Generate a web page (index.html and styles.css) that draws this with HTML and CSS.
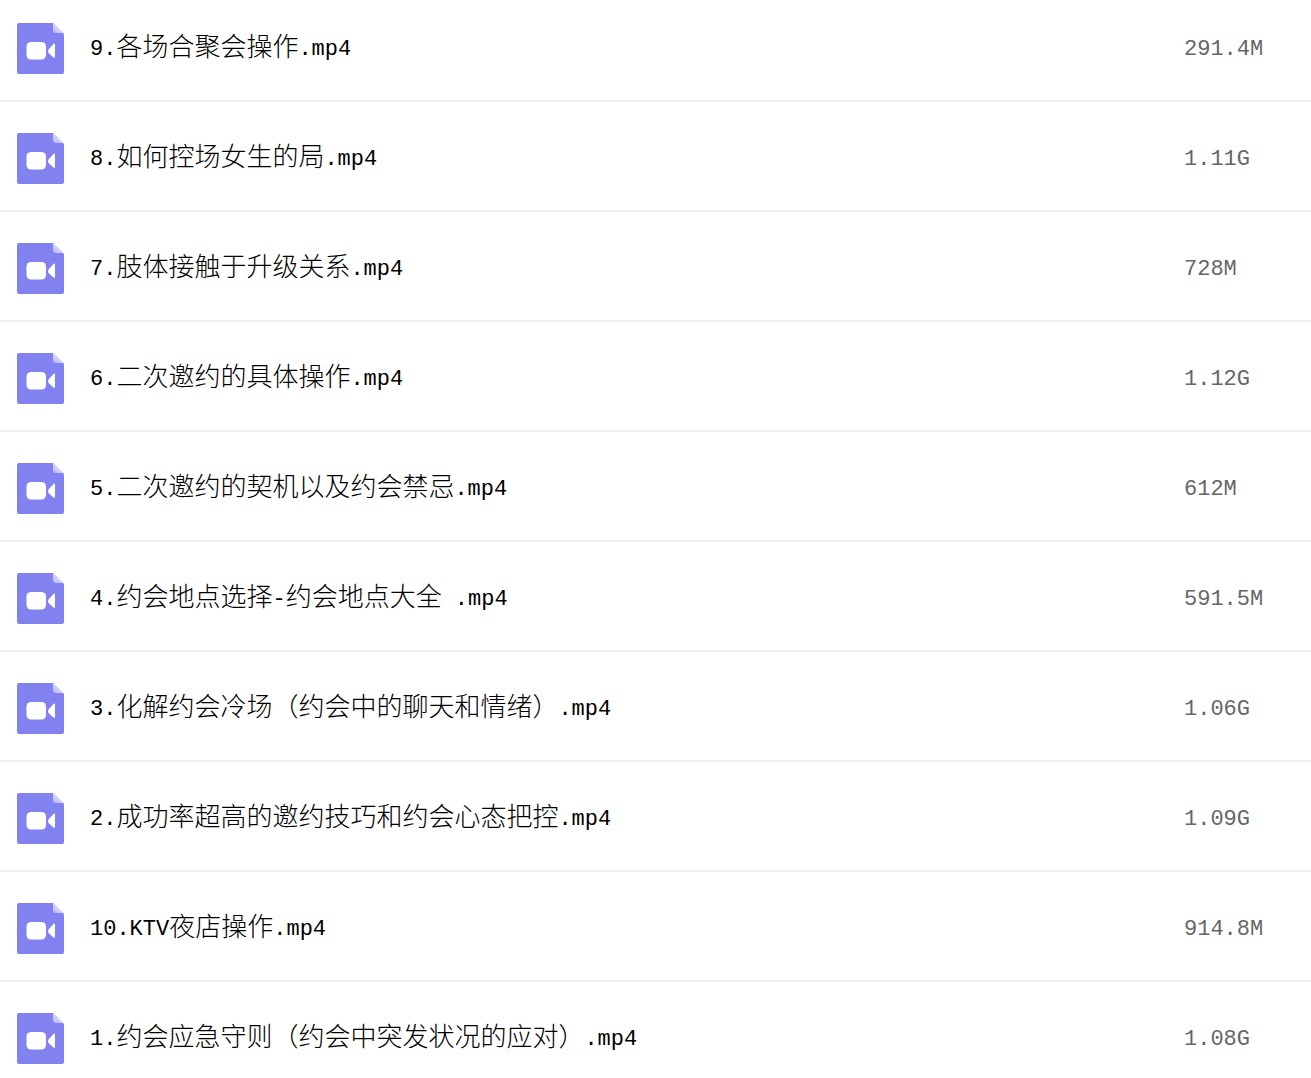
FILE: index.html
```html
<!DOCTYPE html>
<html lang="zh-CN">
<head>
<meta charset="utf-8">
<title>文件列表</title>
<link rel="stylesheet" href="styles.css">
</head>
<body>
<svg class="sprite" aria-hidden="true">
  <defs>
    <linearGradient id="fold" x1="0" y1="1" x2="1" y2="0">
      <stop offset="0" stop-color="#b4b4f8"/>
      <stop offset="0.6" stop-color="#dcdcfc"/>
    </linearGradient>
  </defs>
  <symbol id="video" viewBox="0 0 47 51">
    <path fill="#8182f0" d="M2 0H36L47 11V49Q47 51 45 51H2Q0 51 0 49V2Q0 0 2 0Z"/>
    <path fill="url(#fold)" d="M36 0L47 10H39Q36 10 36 7Z"/>
    <rect fill="#fff" x="9.5" y="19" width="19.5" height="17.5" rx="4.5"/>
    <path fill="#fff" d="M31.5 26.5L36 21.500Q38 19.500 38 21.500V33.500Q38 36 36 34L31.500 30Q30.500 28 31.500 26.500Z"/>
  </symbol>
</svg>
<table class="files">
  <tbody>
    <tr><td class="name"><div class="file"><svg class="icon"><use href="#video"/></svg><span>9.<span class="han">各场合聚会操作</span>.mp4</span></div></td><td class="size">291.4M</td></tr>
    <tr><td class="name"><div class="file"><svg class="icon"><use href="#video"/></svg><span>8.<span class="han">如何控场女生的局</span>.mp4</span></div></td><td class="size">1.11G</td></tr>
    <tr><td class="name"><div class="file"><svg class="icon"><use href="#video"/></svg><span>7.<span class="han">肢体接触于升级关系</span>.mp4</span></div></td><td class="size">728M</td></tr>
    <tr><td class="name"><div class="file"><svg class="icon"><use href="#video"/></svg><span>6.<span class="han">二次邀约的具体操作</span>.mp4</span></div></td><td class="size">1.12G</td></tr>
    <tr><td class="name"><div class="file"><svg class="icon"><use href="#video"/></svg><span>5.<span class="han">二次邀约的契机以及约会禁忌</span>.mp4</span></div></td><td class="size">612M</td></tr>
    <tr><td class="name"><div class="file"><svg class="icon"><use href="#video"/></svg><span>4.<span class="han">约会地点选择</span>-<span class="han">约会地点大全</span> .mp4</span></div></td><td class="size">591.5M</td></tr>
    <tr><td class="name"><div class="file"><svg class="icon"><use href="#video"/></svg><span>3.<span class="han">化解约会冷场（约会中的聊天和情绪）</span>.mp4</span></div></td><td class="size">1.06G</td></tr>
    <tr><td class="name"><div class="file"><svg class="icon"><use href="#video"/></svg><span>2.<span class="han">成功率超高的邀约技巧和约会心态把控</span>.mp4</span></div></td><td class="size">1.09G</td></tr>
    <tr><td class="name"><div class="file"><svg class="icon"><use href="#video"/></svg><span>10.KTV<span class="han">夜店操作</span>.mp4</span></div></td><td class="size">914.8M</td></tr>
    <tr><td class="name"><div class="file"><svg class="icon"><use href="#video"/></svg><span>1.<span class="han">约会应急守则（约会中突发状况的应对）</span>.mp4</span></div></td><td class="size">1.08G</td></tr>
  </tbody>
</table>
</body>
</html>
```
FILE: styles.css
```css
body {
  margin: 0;
  background: #fff;
  color: #000;
  font: 22px/54px "Liberation Mono", "Noto Sans CJK SC", monospace;
}

.sprite {
  position: absolute;
  width: 0;
  height: 0;
}

.files {
  width: 100%;
  border-collapse: separate;
  border-spacing: 0;
}

.files td {
  padding: 31px 0 23px;
  border-bottom: 2px solid #f0f0f0;
  vertical-align: top;
}

.files tr:first-child td {
  padding-top: 23px;
}

.files tr:last-child td {
  padding-bottom: 11px;
  border-bottom: 0;
}

.file {
  display: flex;
  gap: 26px;
  padding-left: 17px;
}

.icon {
  flex: none;
  width: 47px;
  height: 51px;
}

.han {
  font-family: "Noto Sans CJK SC", sans-serif;
  font-size: 26px;
  font-weight: 300;
  line-height: 1;
  vertical-align: -1px;
}

.files .size {
  width: 127px;
  color: #666;
}
```
